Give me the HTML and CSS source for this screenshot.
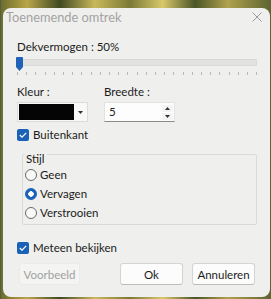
FILE: index.html
```html
<!DOCTYPE html>
<html>
<head>
<meta charset="utf-8">
<link rel="stylesheet" href="styles.css">
</head>
<body>
<div class="dialog">
  <div class="titlebar">
    <span class="title">Toenemende omtrek</span>
    <svg class="close" width="10" height="10" viewBox="0 0 10 10"><path d="M0.5 0.5 L9.5 9.5 M9.5 0.5 L0.5 9.5" stroke="#9a9a9a" stroke-width="1" fill="none"/></svg>
  </div>
  <div class="content">
    <div class="label">Dekvermogen : 50%</div>
    <div class="slider">
      <div class="track"></div>
      <svg class="thumb" width="7" height="14" viewBox="0 0 7 14"><path d="M0 1 Q0 0 1 0 H6 Q7 0 7 1 V10 L3.5 14 L0 10 Z" fill="#1f62b8"/></svg>
    </div>
    <div class="ticks"></div>
    <div class="row">
      <div class="field">
        <div class="label">Kleur :</div>
        <div class="colorbox"><span class="swatch"></span><span class="drop"><svg width="5" height="3" viewBox="0 0 5 3"><path d="M0 0 H5 L2.5 3 Z" fill="#333"/></svg></span></div>
      </div>
      <div class="field">
        <div class="label">Breedte :</div>
        <div class="spin"><span class="value">5</span><span class="arrows"><span class="arr"><svg width="5" height="3" viewBox="0 0 5 3"><path d="M0 3 H5 L2.5 0 Z" fill="#333"/></svg></span><span class="arr"><svg width="5" height="3" viewBox="0 0 5 3"><path d="M0 0 H5 L2.5 3 Z" fill="#333"/></svg></span></span></div>
      </div>
    </div>
    <div class="check outer-check"><span class="box"><svg width="8" height="6" viewBox="0 0 8 6"><path d="M0.8 3 L3 5.2 L7.2 0.8" stroke="#fff" stroke-width="1.2" fill="none"/></svg></span>Buitenkant</div>
    <fieldset class="group">
      <legend>Stijl</legend>
      <div class="radio first"><span class="circle"></span>Geen</div>
      <div class="radio"><span class="circle on"></span>Vervagen</div>
      <div class="radio"><span class="circle"></span>Verstrooien</div>
    </fieldset>
    <div class="check preview-check"><span class="box"><svg width="8" height="6" viewBox="0 0 8 6"><path d="M0.8 3 L3 5.2 L7.2 0.8" stroke="#fff" stroke-width="1.2" fill="none"/></svg></span>Meteen bekijken</div>
    <div class="buttons">
      <span class="btn disabled">Voorbeeld</span>
      <span class="btn">Ok</span>
      <span class="btn">Annuleren</span>
    </div>
  </div>
</div>
</body>
</html>
```

FILE: styles.css
```css
html, body {
  margin: 0;
  padding: 0;
}
body {
  width: 271px;
  height: 299px;
  overflow: hidden;
  font-family: Lato, "Noto Sans", sans-serif;
  font-size: 11.5px;
  color: #1b1b1b;
  background:
    linear-gradient(90deg, #4f5a2c 0px, #6e7440 2px, transparent 3px) 0 0 / 3px 100% no-repeat,
    linear-gradient(90deg, #6b6a2a 0%, #b9a64a 10%, #3f4a22 22%, #c8b85a 35%, #7a7a36 48%, #d8c86a 60%, #4a5426 72%, #b0a24e 84%, #5c6430 100%);
  padding: 8px 0 0 3px;
  box-sizing: border-box;
}
.dialog {
  width: 267px;
  height: 289px;
  background: #efefed;
  border-radius: 8px;
  box-sizing: border-box;
  display: flex;
  flex-direction: column;
}
.titlebar {
  height: 16px;
  padding: 1px 8px 0 3px;
  display: flex;
  align-items: center;
  justify-content: space-between;
}
.title {
  color: #a3a3a3;
  font-size: 12.8px;
}
.close {
  display: block;
}
.content {
  padding: 14px 12px 0 14px;
  display: flex;
  flex-direction: column;
}
.label {
  line-height: 16px;
}
.slider {
  margin-top: 2px;
  height: 14px;
  position: relative;
}
.track {
  margin-top: 2px;
  height: 5px;
  background: #e2e2e0;
  border: 1px solid #d8d8d6;
  border-radius: 1px;
  width: 238px;
}
.thumb {
  position: absolute;
  left: -1px;
  top: 0;
}
.ticks {
  margin-top: 1px;
  height: 3px;
  width: 240px;
  background: repeating-linear-gradient(90deg, #b8b8b6 0 1px, transparent 1px 9.2px);
}
.row {
  display: flex;
  gap: 16px;
  margin-top: 9px;
}
.field {
  display: flex;
  flex-direction: column;
  gap: 2px;
}
.colorbox {
  width: 71px;
  height: 20px;
  box-sizing: border-box;
  border: 1px solid #dcdcda;
  background: #f8f8f8;
  display: flex;
  align-items: stretch;
  padding: 1px;
  gap: 1px;
}
.swatch {
  flex: 1;
  background: #050505;
}
.drop {
  width: 11px;
  display: flex;
  align-items: center;
  justify-content: center;
}
.spin {
  width: 71px;
  height: 20px;
  box-sizing: border-box;
  background: #fdfdfd;
  border: 1px solid #e2e2e0;
  border-bottom: 1px solid #8a8a8a;
  display: flex;
  align-items: center;
  justify-content: space-between;
  padding: 0 1px 0 4px;
}
.value {
  line-height: 16px;
}
.arrows {
  display: flex;
  flex-direction: column;
  gap: 1px;
}
.arr {
  width: 11px;
  height: 7px;
  background: #f4f4f4;
  display: flex;
  align-items: center;
  justify-content: center;
}
.check {
  display: flex;
  align-items: center;
  gap: 4px;
  line-height: 16px;
}
.outer-check {
  margin-top: 5px;
}
.box {
  width: 12px;
  height: 12px;
  border-radius: 2px;
  background: #1a62b8;
  display: flex;
  align-items: center;
  justify-content: center;
}
.group {
  margin: -2px 0 0 5px;
  padding: 0 0 2px 2px;
  width: 235px;
  box-sizing: border-box;
  border: 1px solid #dadad8;
  border-radius: 2px;
  min-width: 0;
}
.group legend {
  padding: 10px 2px 0 1px;
  margin-left: 0;
  line-height: 16px;
}
.radio {
  display: flex;
  align-items: center;
  gap: 3px;
  height: 19px;
}
.radio.first {
  margin-top: -2px;
}
.circle {
  width: 10px;
  height: 10px;
  border: 1px solid #6a6a6a;
  border-radius: 50%;
  background: #f9f9f9;
}
.circle.on {
  border-color: #1a62b8;
  background: radial-gradient(circle, #fff 0 2.5px, #1a62b8 3px);
}
.preview-check {
  margin-top: 15px;
}
.buttons {
  display: flex;
  margin-top: 7px;
  margin-right: 3px;
  gap: 9px;
}
.btn {
  width: 63px;
  height: 22px;
  box-sizing: border-box;
  border: 1px solid #d4d4d2;
  border-bottom-color: #bdbdbb;
  border-radius: 3px;
  background: #fcfcfc;
  display: flex;
  align-items: center;
  justify-content: center;
}
.btn.disabled {
  margin-right: auto;
  width: 61px;
  margin-left: 2px;
  background: #f4f4f2;
  border-color: #ebebe9;
  color: #a0a0a0;
}
```
